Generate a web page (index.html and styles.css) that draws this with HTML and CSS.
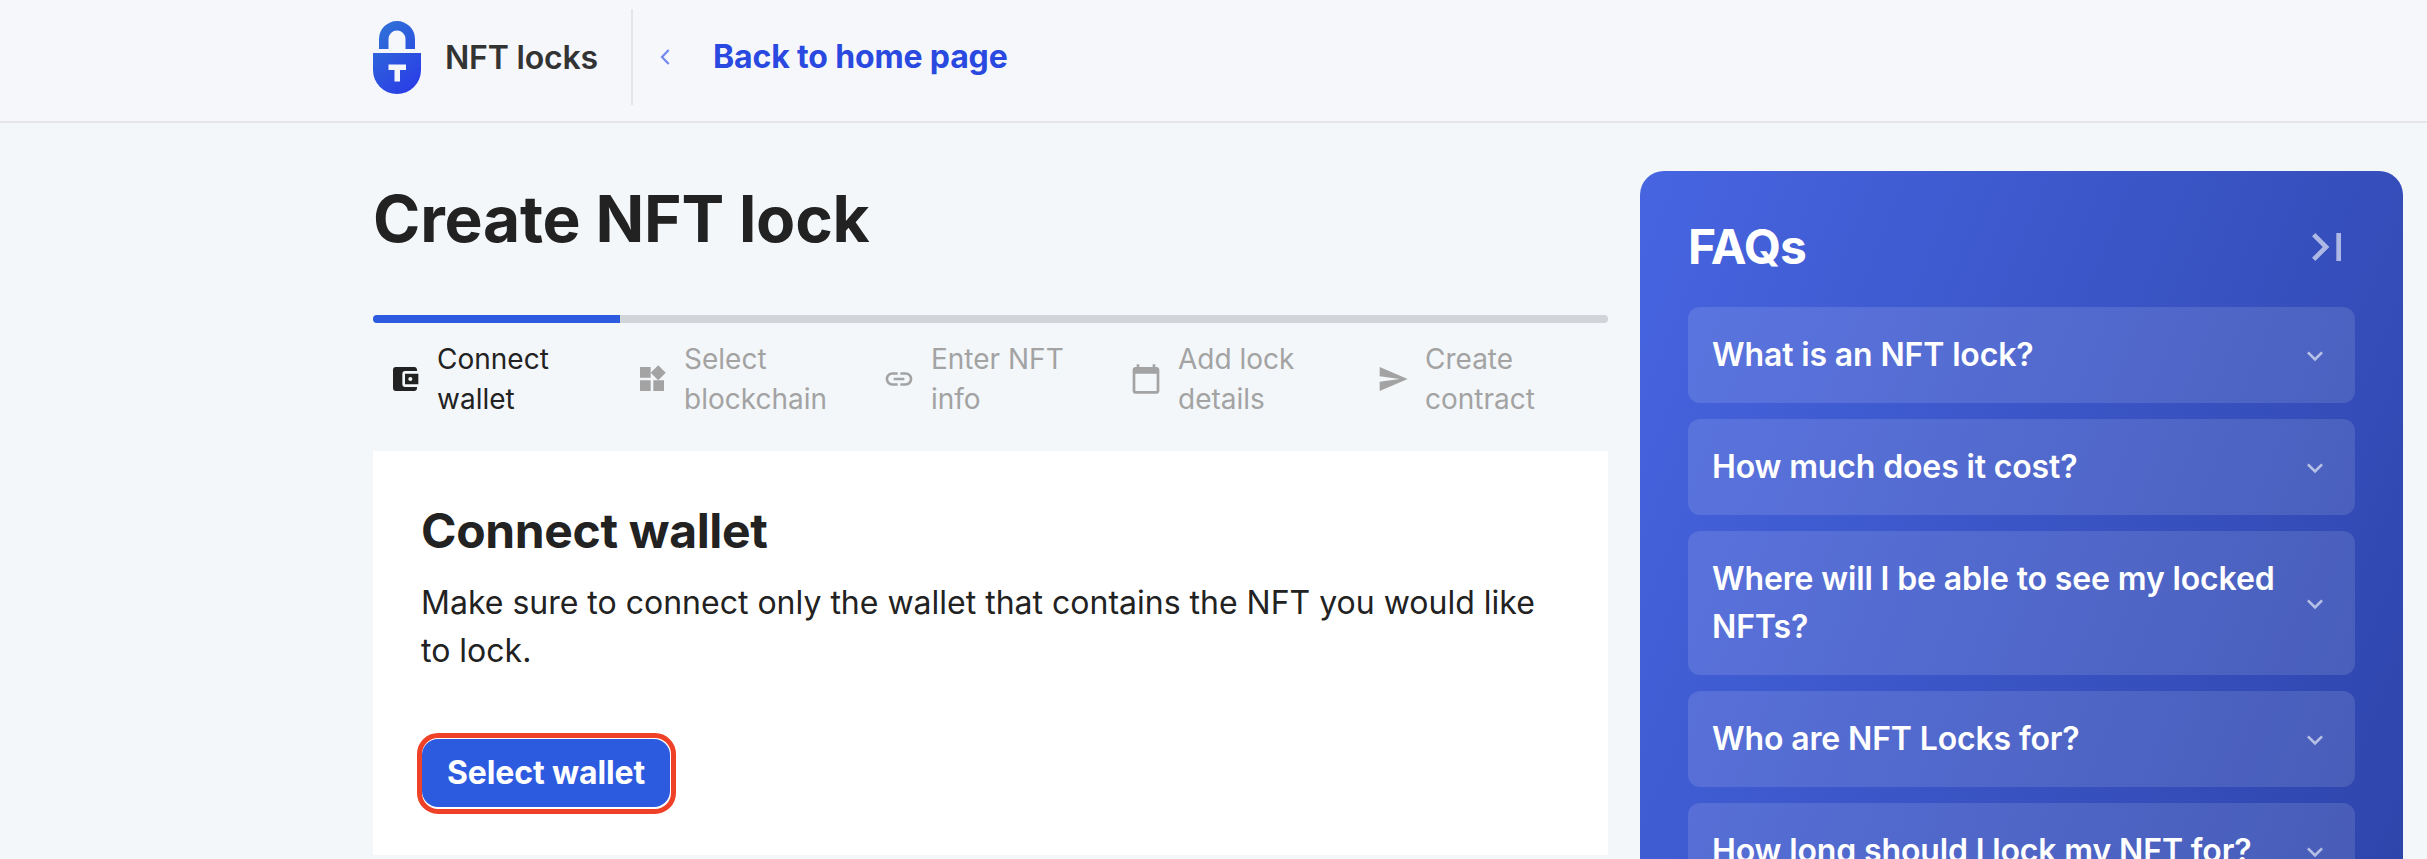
FILE: index.html
```html
<!DOCTYPE html>
<html lang="en">
<head>
<meta charset="utf-8">
<title>Create NFT lock</title>
<link rel="stylesheet" href="styles.css">
</head>
<body>
<header class="header">
  <a class="logo" href="#">
    <svg class="logo-mark" viewBox="0 0 48 73">
      <defs>
        <linearGradient id="lock" gradientUnits="userSpaceOnUse" x1="2" y1="18" x2="42" y2="66">
          <stop offset="0" stop-color="#2f6bd9"/>
          <stop offset="1" stop-color="#2a3ee6"/>
        </linearGradient>
      </defs>
      <path fill="url(#lock)" d="M6 28V18a18 18 0 0 1 36 0v10H32.500V18a8.500 8.500 0 0 0-17 0v10z"/>
      <path fill="url(#lock)" d="M0 32h48v17a24 24 0 0 1-48 0z"/>
      <path fill="#f5f7fb" d="M15.500 43.500h17.500v5.500h-6v11.500h-5.500V49h-6z"/>
    </svg>
    <span class="logo-text">NFT locks</span>
  </a>
  <a class="back" href="#">
    <svg class="back-icon" viewBox="0 0 10 16"><path d="M8.700 1L2 8l6.700 7"/></svg>
    <span>Back to home page</span>
  </a>
</header>
<div class="page">
  <main class="main">
    <h1 class="title">Create NFT lock</h1>
    <div class="progress"><div class="progress-fill"></div></div>
    <ol class="steps">
      <li class="step active"><svg class="step-icon" viewBox="0 0 24 24"><path d="M21 18v1c0 1.100-.9 2-2 2H5c-1.110 0-2-.9-2-2V5c0-1.100.89-2 2-2h14c1.100 0 2 .9 2 2v1h-9c-1.110 0-2 .9-2 2v8c0 1.100.89 2 2 2h9zm-9-2h10V8H12v8zm4-2.500c-.83 0-1.500-.67-1.500-1.500s.67-1.500 1.500-1.500 1.500.67 1.500 1.500-.67 1.500-1.500 1.500z"/></svg><span>Connect wallet</span></li>
      <li class="step"><svg class="step-icon" viewBox="0 0 24 24"><path d="M13 13v8h8v-8h-8zM3 21h8v-8H3v8zM3 3v8h8V3H3zm13.660-1.310L11 7.340 16.660 13l5.660-5.660-5.660-5.650z"/></svg><span>Select blockchain</span></li>
      <li class="step"><svg class="step-icon" viewBox="0 0 24 24"><path d="M3.900 12c0-1.710 1.390-3.100 3.100-3.100h4V7H7c-2.760 0-5 2.240-5 5s2.240 5 5 5h4v-1.900H7c-1.710 0-3.100-1.390-3.100-3.100zM8 13h8v-2H8v2zm9-6h-4v1.900h4c1.710 0 3.100 1.390 3.100 3.100s-1.390 3.100-3.100 3.100h-4V17h4c2.760 0 5-2.240 5-5s-2.240-5-5-5z"/></svg><span>Enter NFT info</span></li>
      <li class="step"><svg class="step-icon" viewBox="0 0 24 24"><path d="M20 3h-1V1h-2v2H7V1H5v2H4c-1.100 0-2 .9-2 2v16c0 1.100.9 2 2 2h16c1.100 0 2-.9 2-2V5c0-1.100-.9-2-2-2zm0 18H4V8h16v13z"/></svg><span>Add lock details</span></li>
      <li class="step"><svg class="step-icon" viewBox="0 0 24 24"><path d="M2.010 21L23 12 2.010 3 2 10l15 2-15 2z"/></svg><span>Create contract</span></li>
    </ol>
    <section class="card">
      <h2 class="card-title">Connect wallet</h2>
      <p class="card-text">Make sure to connect only the wallet that contains the NFT you would like to lock.</p>
      <div class="focus-ring"><button class="button" type="button">Select wallet</button></div>
    </section>
  </main>
  <aside class="faq">
    <div class="faq-head">
      <h2 class="faq-title">FAQs</h2>
      <svg class="collapse" viewBox="0 0 24 24"><path d="M5.590 7.410L10.180 12l-4.590 4.590L7 18l6-6-6-6zM16 6h2v12h-2z"/></svg>
    </div>
    <div class="faq-item"><span>What is an NFT lock?</span><svg class="chevron" viewBox="0 0 24 24"><path d="M7.410 8.590L12 13.170l4.590-4.580L18 10l-6 6-6-6z"/></svg></div>
    <div class="faq-item"><span>How much does it cost?</span><svg class="chevron" viewBox="0 0 24 24"><path d="M7.410 8.590L12 13.170l4.590-4.580L18 10l-6 6-6-6z"/></svg></div>
    <div class="faq-item"><span>Where will I be able to see my locked NFTs?</span><svg class="chevron" viewBox="0 0 24 24"><path d="M7.410 8.590L12 13.170l4.590-4.580L18 10l-6 6-6-6z"/></svg></div>
    <div class="faq-item"><span>Who are NFT Locks for?</span><svg class="chevron" viewBox="0 0 24 24"><path d="M7.410 8.590L12 13.170l4.590-4.580L18 10l-6 6-6-6z"/></svg></div>
    <div class="faq-item"><span>How long should I lock my NFT for?</span><svg class="chevron" viewBox="0 0 24 24"><path d="M7.410 8.590L12 13.170l4.590-4.580L18 10l-6 6-6-6z"/></svg></div>
  </aside>
</div>
</body>
</html>
```
FILE: styles.css
```css
* { box-sizing: border-box; }
body {
  margin: 0;
  height: 859px;
  overflow: hidden;
  display: flex;
  flex-direction: column;
  background: #f3f7fa;
  color: #222;
  font: 400 32px/48px Inter, "Liberation Sans", sans-serif;
}
h1, h2, p, ol { margin: 0; padding: 0; }
a { text-decoration: none; color: inherit; }
svg { display: block; flex: none; fill: currentColor; }

.header {
  flex: none;
  display: flex;
  height: 123px;
  padding: 9px 0 0 373px;
  background: #f5f7fb;
  border-bottom: 2px solid #e5e5e5;
}
.logo {
  display: flex;
  align-items: center;
  width: 260px;
  height: 96px;
  border-right: 2px solid #e5e5e5;
}
.logo-mark { width: 48px; height: 73px; }
.logo-text {
  padding-top: 2px;
  margin-left: 24px;
  font-weight: 600;
  letter-spacing: -.006em;
  color: #333;
  white-space: nowrap;
}
.back {
  display: flex;
  align-items: center;
  height: 96px;
  margin-left: 27px;
  gap: 43px;
  color: #2949e0;
  font-weight: 700;
  letter-spacing: -.0045em;
}
.back-icon { width: 10px; height: 16px; fill: none; stroke: #7488ec; stroke-width: 2.2; }

.page {
  display: flex;
  align-items: flex-start;
  gap: 32px;
  height: 736px;
  overflow: hidden;
  padding: 48px 24px 0 373px;
}
.main { width: 1235px; flex: none; }
.title { padding-top: 8px; font-size: 64px; line-height: 80px; font-weight: 700; letter-spacing: -.003em; }
.progress {
  height: 8px;
  margin-top: 56px;
  border-radius: 4px;
  overflow: hidden;
  background: #d1d5d9;
}
.progress-fill { width: 20%; height: 100%; background: #2d5be0; }
.steps {
  display: grid;
  grid-template-columns: repeat(5, 1fr);
  list-style: none;
  padding: 16px 0 32px;
}
.step {
  display: flex;
  align-items: center;
  gap: 16px;
  padding: 0 16px;
  color: #a3a3a3;
  font-size: 28px;
  line-height: 40px;
}
.step.active { color: #222; }
.step-icon { width: 32px; height: 32px; }

.card { height: 404px; padding: 48px; background: #fff; }
.card-title { font-size: 48px; line-height: 64px; font-weight: 700; letter-spacing: -.007em; }
.card-text { margin-top: 16px; }
.focus-ring {
  width: 259px;
  height: 81px;
  margin: 58px 0 0 -4px;
  padding: 1px 0 0;
  border: 5px solid #ee4127;
  border-radius: 21px;
}
.button {
  display: block;
  width: 248px;
  height: 68px;
  padding: 0;
  border: 0;
  border-radius: 16px;
  background: #2d5be0;
  color: #fff;
  font: 700 32px/68px Inter, "Liberation Sans", sans-serif;
  letter-spacing: -.004em;
}

.faq {
  flex: 1;
  height: 860px;
  padding: 48px;
  border-radius: 24px;
  background: linear-gradient(112deg, #4765e1, #2c43a8);
  color: #fff;
}
.faq-head { display: flex; align-items: center; justify-content: space-between; height: 56px; margin-bottom: 32px; }
.faq-title { font-size: 48px; line-height: 56px; font-weight: 700; letter-spacing: -.02em; }
.collapse { width: 56px; height: 56px; color: rgba(255, 255, 255, .6); }
.faq-item {
  display: flex;
  align-items: center;
  justify-content: space-between;
  gap: 16px;
  padding: 24px;
  margin-bottom: 16px;
  border-radius: 12px;
  background: rgba(255, 255, 255, .12);
  font-weight: 600;
  letter-spacing: -.0045em;
}
.chevron { width: 32px; height: 32px; margin-top: 2px; color: rgba(255, 255, 255, .6); }
```
